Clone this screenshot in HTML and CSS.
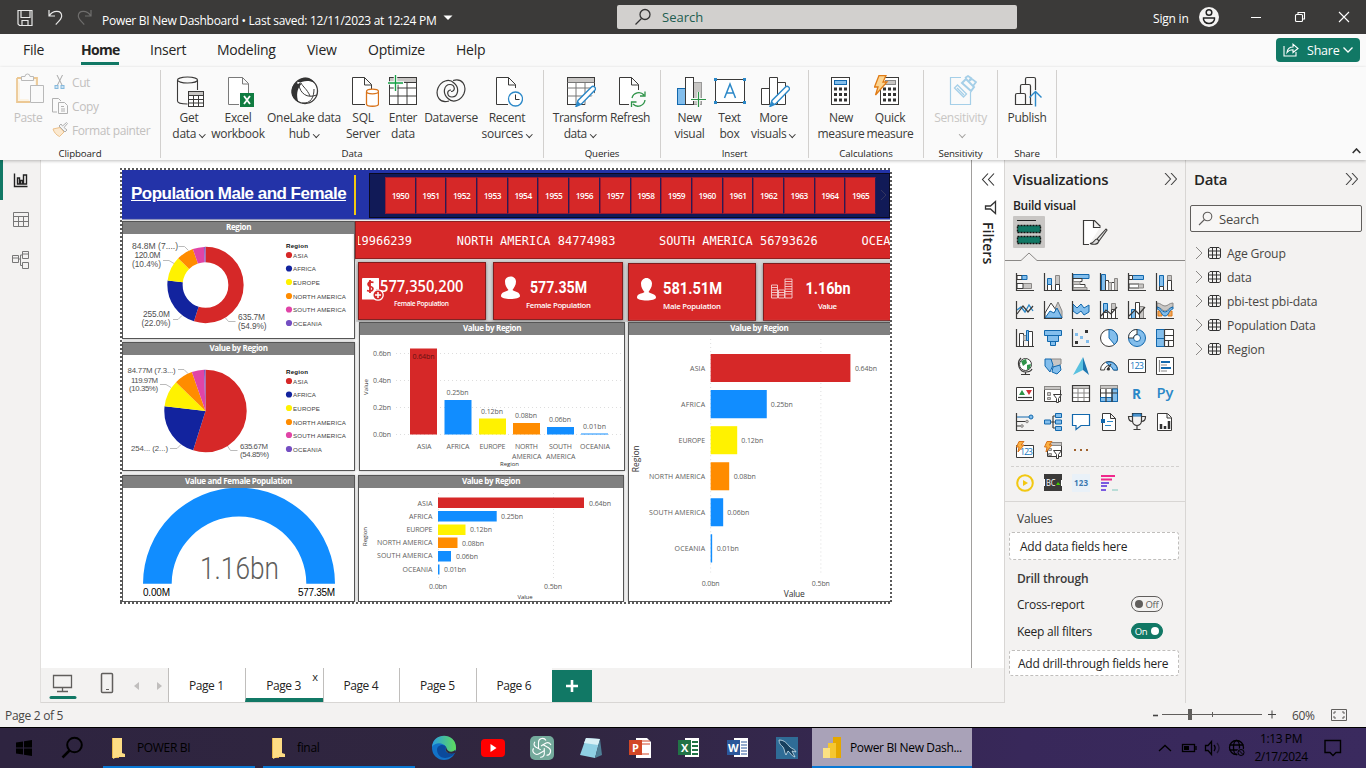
FILE: index.html
```html
<!DOCTYPE html>
<html lang="en">
<head>
<meta charset="utf-8">
<title>Power BI New Dashboard</title>
<link rel="stylesheet" href="styles.css">
</head>
<body>
<header class="titlebar">
  <svg class="quick" width="100" height="34" viewBox="0 0 100 34">
    <g fill="none" stroke="#e8e8e8" stroke-width="1.2"><path d="M18 10.5h14v15H19.500l-1.500-1.500zM21 10.500v7h9v-7M22 25v-4.500h6V25"/><path d="M49 10v6h6M49.500 15.500c3-5 12-6 12.200.5 0 3-3 5.500-6 8.500"/></g>
    <path d="M91 10v6h-6M90.500 15.500c-3-5-12-6-12.200.5 0 3 3 5.500 6 8.500" fill="none" stroke="#6f6e6d" stroke-width="1.2"/>
  </svg>
  <span class="doc">Power BI New Dashboard • Last saved: 12/11/2023 at 12:24 PM</span>
  <svg class="caret" width="10" height="6" viewBox="0 0 10 6"><path d="M.5.5h9L5 5z" fill="#fff"/></svg>
  <div class="topsearch"><svg width="18" height="18" viewBox="0 0 18 18"><g fill="none" stroke="#333" stroke-width="1.3"><circle cx="11" cy="6.500" r="5"/><path d="M7.500 10.500L1.500 16.500"/></g></svg><span>Search</span></div>
  <span class="signin">Sign in</span>
  <svg class="avatar" width="20" height="20" viewBox="0 0 20 20"><circle cx="10" cy="10" r="10" fill="#f3f2f1"/><g fill="none" stroke="#222" stroke-width="1.500"><circle cx="10" cy="5.500" r="2.800"/><path d="M4.500 11h11c.5 3-2 5.500-5.500 5.500S4 14 4.500 11z"/></g></svg>
  <svg class="winbtns" width="100" height="12" viewBox="0 0 100 12"><g fill="none" stroke="#fff" stroke-width="1.100"><path d="M0 6.500h10M88 1l10 10M98 1L88 11"/><rect x="44.500" y="3.500" width="7" height="7" rx="1"/><path d="M47 3.500V1.500h6.500V8H51.500"/></g></svg>
</header>

<nav class="tabs">
  <span>File</span><span class="on">Home</span><span>Insert</span><span>Modeling</span><span>View</span><span>Optimize</span><span>Help</span>
  <button class="share"><svg width="16" height="14" viewBox="0 0 16 14"><path d="M1 3v10h12V9M4 9.500c.5-4 3-5.500 6-5.500V1.200l5 4.300-5 4V6.800C7.500 6.800 5.500 7.500 4 9.500z" fill="none" stroke="#fff" stroke-width="1.100"/></svg>Share<svg width="10" height="6" viewBox="0 0 10 6"><path d="M.5.5L5 5 9.500.5" fill="none" stroke="#fff" stroke-width="1.300"/></svg></button>
</nav>

<section class="ribbon">
  <div class="group g-clip">
    <div class="clip">
      <div class="paste"><svg width="30" height="32" viewBox="0 0 30 32"><path d="M1 5h20v8M1 5v24h13" fill="#fcf3e3" stroke="#ecc894" stroke-width="1.800"/><path d="M4 8h15v5h-5v13H4z" fill="#fbfbfb"/><path d="M5.500 7.500v-4h3.500a2.500 2.500 0 015 0h3.500v4zM14.500 12.500h13v17h-13z" fill="#fafafa" stroke="#b9b9b9"/></svg>Paste</div>
      <div class="cliplist">
        <span><svg width="16" height="16" viewBox="0 0 16 16"><path d="M5 1l5 10M10.500 1L5.500 11" fill="none" stroke="#a8a8a8"/><g fill="#cfe4f3" stroke="#86bade"><rect x="3" y="11.500" width="3" height="3"/><rect x="9" y="11.500" width="3" height="3"/></g></svg>Cut</span>
        <span><svg width="16" height="16" viewBox="0 0 16 16"><path d="M5 14H.5V.5h6L9 3M6.500 4.500h6l3 3v8h-9zM9 8.500h3M9 11h4M9 13h4" fill="none" stroke="#b0b0b0"/></svg>Copy</span>
        <span><svg width="16" height="16" viewBox="0 0 16 16"><path d="M1 7l7-1.500L12 10l-4.500 4.500C4 13 2 10 1 7z" fill="#fbe9d0" stroke="#ecc08a"/><path d="M7 4l6 6 2-2-3-2.500 3.500-4-1-1-4 3.500L9 2z" fill="#f6f6f6" stroke="#b0b0b0"/></svg>Format painter</span>
      </div>
    </div>
    <footer>Clipboard</footer>
  </div>

  <div class="group g-data">
    <div class="items">
      <div><svg width="32" height="32" viewBox="0 0 32 32"><g fill="none" stroke="#3b3a39" stroke-width="1.100"><ellipse cx="14.500" cy="5" rx="10" ry="3"/><path d="M4.500 5v21c0 2 4 3 10 3M24.500 5v10"/></g><rect x="15.500" y="16.500" width="15" height="15" fill="#fff" stroke="#3b3a39"/><path d="M16 17h14v3H16z" fill="#c8c6c4"/><path d="M15.500 20.500h15M15.500 24.500h15M15.500 28h15M20.500 20v11M25.500 20v11" stroke="#3b3a39"/></svg><b>Get</b><b>data<i></i></b></div>
      <div><svg width="32" height="32" viewBox="0 0 32 32"><path d="M17 29.500H6.500v-27h14l6 6V18M20.500 2.500v6.500h6" fill="#fff" stroke="#7a7a7a"/><rect x="18" y="18" width="14" height="14" fill="#107c41"/><path d="M22 21l6 8M28 21l-6 8" stroke="#fff" stroke-width="1.800"/></svg><b>Excel</b><b>workbook</b></div>
      <div><svg width="32" height="32" viewBox="0 0 32 32"><circle cx="17" cy="16" r="12.500" fill="#fff" stroke="#3b3a39" stroke-width="1.300"/><path d="M9 8c3-7.500 14-7.500 17.500 0C21 5 15 5.500 10 9zM8.500 7C.5 13 2 23 10.500 27.500 8 20 9 14 13 9.500c0-2-3-3.500-4.500-2.500z" fill="#333"/><path d="M11 10c1 8 8 14 17.500 10M14 28c9 1 12-6 12-14M13 8c2 4 6 6 9 13" fill="none" stroke="#3b3a39"/></svg><b>OneLake data</b><b>hub<i></i></b></div>
      <div><svg width="32" height="32" viewBox="0 0 32 32"><path d="M18 29.500H5.500v-27h12l7 7V14M17.500 2.500v7.500h7" fill="#fff" stroke="#3b3a39"/><path d="M19.500 17v12c0 3 12 3 12 0V17" fill="#fff" stroke="#d9731a" stroke-width="1.300"/><ellipse cx="25.500" cy="16.500" rx="6" ry="2.300" fill="#fff" stroke="#d9731a" stroke-width="1.300"/></svg><b>SQL</b><b>Server</b></div>
      <div><svg width="32" height="32" viewBox="0 0 32 32"><rect x="2.500" y="2.500" width="27" height="27" fill="#fff" stroke="#3b3a39"/><path d="M3 3h26v4H3z" fill="#c8c6c4"/><path d="M2.500 7.500h27M2.500 13h27M2.500 21h27M11 8v21M20 8v21" stroke="#3b3a39"/><path d="M1 8h16M8.500 0v16" stroke="#fafafa" stroke-width="3.500"/><path d="M1 8h15M8.500 0v16" stroke="#15a045" stroke-width="1.300"/></svg><b>Enter</b><b>data</b></div>
      <div><svg width="32" height="32" viewBox="0 0 32 32"><g fill="none" stroke="#3b3a39" stroke-width="1.200"><path d="M14 26c-9 3-14-5-11-13C6 6 14 3 19 8c6 5 4 14-2 14-5 0-6-7-1-7"/><path d="M18 5.500c9-3 14 5 11 13-3 7-11 10-16 5-6-5-4-14 2-14 5 0 6 7 1 7"/></g></svg><b>Dataverse</b></div>
      <div><svg width="32" height="32" viewBox="0 0 32 32"><path d="M17 29.500H5.500v-27h12l7 7V13M17.500 2.500v7.500h7" fill="#fff" stroke="#3b3a39"/><circle cx="24.500" cy="24" r="7" fill="#fff" stroke="#2b88c8" stroke-width="1.300"/><path d="M24.500 19.500v5h4" fill="none" stroke="#333"/></svg><b>Recent</b><b>sources<i></i></b></div>
    </div>
    <footer>Data</footer>
  </div>

  <div class="group g-query">
    <div class="items">
      <div><svg width="32" height="32" viewBox="0 0 32 32"><rect x="3.500" y="2.500" width="27" height="27" fill="#fff" stroke="#3b3a39"/><path d="M4 3h26v4H4z" fill="#c8c6c4"/><path d="M3.500 7.500h27M3.500 13h27M3.500 21h27M12 8v21M21 8v21" stroke="#777"/><path d="M20 31h12V16z" fill="#fafafa"/><path d="M12 31.500l2-6L27.500 12c2-2 5 1 3.500 3L17.500 29z" fill="#fff" stroke="#2b88c8" stroke-width="1.400"/><path d="M12 31.500l2-5 3 3z" fill="#2b88c8"/></svg><b>Transform</b><b>data<i></i></b></div>
      <div><svg width="32" height="32" viewBox="0 0 32 32"><path d="M15 29.500H5.500v-27h12l7 7V15M17.500 2.500v7.500h7" fill="#fff" stroke="#3b3a39"/><path d="M18 23a7 7 0 0112-3M31 25a7 7 0 01-12 4M31 16.500V21h-5M17.500 32v-5h5" fill="none" stroke="#2e9348" stroke-width="1.300"/></svg><b>Refresh</b></div>
    </div>
    <footer>Queries</footer>
  </div>

  <div class="group g-insert">
    <div class="items">
      <div><svg width="32" height="32" viewBox="0 0 32 32"><rect x="3.500" y="13.500" width="8" height="16" fill="#83beec" stroke="#1268ad"/><rect x="19.500" y="7.500" width="8" height="22" fill="#c8c6c4" stroke="#999"/><rect x="11.500" y="2.500" width="8" height="27" fill="#fff" stroke="#3b3a39"/><path d="M17 24.500h15M24.500 17v15" stroke="#fafafa" stroke-width="3"/><path d="M17 24.500h15M24.500 17v15" stroke="#2e9348" stroke-width="1.200"/></svg><b>New</b><b>visual</b></div>
      <div><svg width="32" height="32" viewBox="0 0 32 32"><rect x="1.500" y="4.500" width="29" height="23" fill="#fff" stroke="#3b3a39"/><g fill="#2b88c8"><path d="M0 3h3v3H0zM29 3h3v3h-3zM0 26h3v3H0zM29 26h3v3h-3z"/></g><path d="M10.500 23L16 9l5.500 14M12.500 18h7" fill="none" stroke="#2b88c8" stroke-width="1.500"/></svg><b>Text</b><b>box</b></div>
      <div><svg width="32" height="32" viewBox="0 0 32 32"><path d="M3.500 13.500h8v16h-8zM19.500 7.500h8v22h-8zM11.500 2.500h8v27h-8z" fill="#fff" stroke="#3b3a39"/><path d="M12 31.500l2-6L27.500 12c2-2 5 1 3.500 3L17.500 29z" fill="#fff" stroke="#2b88c8" stroke-width="1.400"/><path d="M12 31.500l2-5 3 3z" fill="#2b88c8"/></svg><b>More</b><b>visuals<i></i></b></div>
    </div>
    <footer>Insert</footer>
  </div>

  <div class="group g-calc">
    <div class="items">
      <div><svg width="32" height="32" viewBox="0 0 32 32"><rect x="6.500" y="2.500" width="18" height="27" fill="#fff" stroke="#3b3a39"/><rect x="9.500" y="5.500" width="12" height="4" fill="#83beec" stroke="#1268ad"/><path d="M9 14h13M9 19.500h13M9 25h13" stroke="#333" stroke-width="3" stroke-dasharray="3 2"/></svg><b>New</b><b>measure</b></div>
      <div><svg width="32" height="32" viewBox="0 0 32 32"><rect x="6.500" y="2.500" width="18" height="27" fill="#fff" stroke="#3b3a39"/><rect x="11.500" y="5.500" width="10" height="4" fill="#c8c6c4" stroke="#888"/><path d="M9 14h13M9 19.500h13M9 25h13" stroke="#333" stroke-width="3" stroke-dasharray="3 2"/><path d="M5 .5h7L9 7h4L1.500 20 4 12H.5z" fill="#fbd491" stroke="#e07b16" stroke-width="1.300"/></svg><b>Quick</b><b>measure</b></div>
    </div>
    <footer>Calculations</footer>
  </div>

  <div class="group g-sens">
    <div class="items off">
      <div><svg width="32" height="32" viewBox="0 0 32 32"><path d="M16 2.500H5.500v27h20V17" fill="none" stroke="#a5cfe8" stroke-width="1.200"/><path d="M9.500 13l3-3 9 9-3 3zM12 13l7 7" fill="none" stroke="#a5cfe8" stroke-width="1.300"/><path d="M17 8l9 8 3-4-8-8z" fill="#fafafa" stroke="#a5cfe8" stroke-width="2"/><path d="M20 3l3-2 3 2-2 3 3-2 4 3-3 4" fill="none" stroke="#a5cfe8" stroke-width="1.800"/></svg><b>Sensitivity</b><b><i></i></b></div>
    </div>
    <footer>Sensitivity</footer>
  </div>

  <div class="group g-share">
    <div class="items">
      <div><svg width="32" height="32" viewBox="0 0 32 32"><path d="M14.500 10V4c0-1 .5-1.500 1.500-1.500h7c1 0 1.500.5 1.500 1.500v11M9.500 18v-7c0-1 .5-1.500 1.500-1.500h7c1 0 1.500.5 1.500 1.500v18M4.500 20c0-1 .5-1.500 1.500-1.500h7c1 0 1.500.5 1.500 1.500v9.500h-10zM14.500 29.500h7" fill="none" stroke="#3b3a39" stroke-width="1.200"/><path d="M24.500 31.500v-15M18.500 22.500l6-6 6 6" fill="none" stroke="#2b88c8" stroke-width="1.400"/></svg><b>Publish</b></div>
    </div>
    <footer>Share</footer>
  </div>
  <svg class="collapse" width="9" height="6" viewBox="0 0 9 6"><path d="M.7 5l3.800-4 3.800 4" fill="none" stroke="#333" stroke-width="1.600"/></svg>
</section>

<main class="main">
  <aside class="rail">
    <svg class="sel" width="40" height="40" viewBox="0 160 40 40"><path d="M0 160h3v40H0z" fill="#117865"/><path d="M14.500 173.500v13h13M17.500 184v-6h2v6zM20.500 184v-3.500h2v3.500zM23.500 184v-9h3v9z" fill="none" stroke="#222" stroke-width="1.400"/></svg>
    <svg width="40" height="40" viewBox="0 200 40 40"><path d="M13.500 212.500h15v14h-15zM13.500 216.500h15M13.500 221.500h15M18.500 216v10M23.500 216v10" fill="none" stroke="#777"/></svg>
    <svg width="40" height="40" viewBox="0 240 40 40"><path d="M12.500 255.500h6v7h-6zM22.500 251.500h6v7h-6zM22.500 262.500h6v6h-6zM12.500 258h6M22.500 254h6M18.500 259h2v-4h2M20.500 259v6.500h2" fill="none" stroke="#777"/></svg>
  </aside>

  <div class="work">
    <div class="stage">
      <div class="sheet">
        <div class="report">
          <div class="head">
            <h1>Population Male and Female</h1>
            <div class="rule"></div>
            <div class="slicer"><span>1950</span><span>1951</span><span>1952</span><span>1953</span><span>1954</span><span>1955</span><span>1956</span><span>1957</span><span>1958</span><span>1959</span><span>1960</span><span>1961</span><span>1962</span><span>1963</span><span>1964</span><span>1965</span><svg width="8" height="12" viewBox="0 0 8 12"><path d="M1 1l5 5-5 5" fill="none" stroke="#33355f"/></svg></div>
          </div>
          <div class="body">
            <div class="left">
              <section class="card c1"><h2>Region</h2>
                <svg class="arial" viewBox="123 234 231 104">
                  <g transform="rotate(-90 205.500 285)" fill="none" stroke-width="15.300"><circle cx="205.500" cy="285" r="30.500" pathLength="100" stroke="#d62828" stroke-dasharray="54.9 45.1"/><circle cx="205.500" cy="285" r="30.500" pathLength="100" stroke="#12239e" stroke-dasharray="22 78" stroke-dashoffset="-54.9"/><circle cx="205.500" cy="285" r="30.500" pathLength="100" stroke="#fff200" stroke-dasharray="10.4 89.600" stroke-dashoffset="-76.9"/><circle cx="205.500" cy="285" r="30.500" pathLength="100" stroke="#ff8c00" stroke-dasharray="7.3 92.700" stroke-dashoffset="-87.3"/><circle cx="205.500" cy="285" r="30.500" pathLength="100" stroke="#e044a7" stroke-dasharray="4.8 95.200" stroke-dashoffset="-94.6"/><circle cx="205.500" cy="285" r="30.500" pathLength="100" stroke="#744ec2" stroke-dasharray=".6 99.400" stroke-dashoffset="-99.4"/></g>
                  <path d="M178.500 246.500h6l4 4M163 260.500h6l5 3M173 319.500h5l4-4M225.500 318l3 3.500h7" fill="none" stroke="#aaa" stroke-width=".8"/>
                  <g class="t8"><text x="132" y="249" textLength="46" lengthAdjust="spacingAndGlyphs">84.8M (7....)</text><text x="134.500" y="258" textLength="26">120.0M</text><text x="132" y="267" textLength="29">(10.4%)</text><text x="143" y="317" textLength="27">255.0M</text><text x="141.500" y="326" textLength="29">(22.0%)</text><text x="238" y="320" textLength="27">635.7M</text><text x="238" y="329" textLength="28.500">(54.9%)</text></g>
                  <g class="leg"><text x="286" y="247.500" class="hd" textLength="22">Region</text><circle cx="289" cy="255" r="3.100" fill="#d62828"/><text x="293" y="257.500" textLength="15">ASIA</text><circle cx="289" cy="268.500" r="3.100" fill="#12239e"/><text x="293" y="271" textLength="23">AFRICA</text><circle cx="289" cy="282" r="3.100" fill="#fff200"/><text x="293" y="284.500" textLength="27">EUROPE</text><circle cx="289" cy="296" r="3.100" fill="#ff8c00"/><text x="293" y="298.500" textLength="53">NORTH AMERICA</text><circle cx="289" cy="309.500" r="3.100" fill="#e044a7"/><text x="293" y="312" textLength="53">SOUTH AMERICA</text><circle cx="289" cy="323" r="3.100" fill="#744ec2"/><text x="293" y="325.500" textLength="29">OCEANIA</text></g>
                </svg></section>
              <section class="card c2"><h2>Value by Region</h2>
                <svg class="arial" viewBox="123 355 231 114">
                  <g transform="rotate(-90 205.500 411)" fill="none" stroke-width="41.200"><circle cx="205.500" cy="411" r="20.600" pathLength="100" stroke="#d62828" stroke-dasharray="54.9 45.1"/><circle cx="205.500" cy="411" r="20.600" pathLength="100" stroke="#12239e" stroke-dasharray="22 78" stroke-dashoffset="-54.9"/><circle cx="205.500" cy="411" r="20.600" pathLength="100" stroke="#fff200" stroke-dasharray="10.4 89.600" stroke-dashoffset="-76.9"/><circle cx="205.500" cy="411" r="20.600" pathLength="100" stroke="#ff8c00" stroke-dasharray="7.3 92.700" stroke-dashoffset="-87.3"/><circle cx="205.500" cy="411" r="20.600" pathLength="100" stroke="#e044a7" stroke-dasharray="4.8 95.200" stroke-dashoffset="-94.6"/><circle cx="205.500" cy="411" r="20.600" pathLength="100" stroke="#744ec2" stroke-dasharray=".6 99.400" stroke-dashoffset="-99.4"/></g>
                  <path d="M178 369.500h6l4 4M160 384.500h6l5 3M170 448.500h7l4-4M227.500 446l3 4.500h7" fill="none" stroke="#aaa" stroke-width=".8"/>
                  <g class="t7"><text x="127.500" y="372.500" textLength="48">84.77M (7.3...)</text><text x="131" y="383" textLength="27">119.97M</text><text x="129" y="391" textLength="29">(10.35%)</text><text x="131" y="451" textLength="37">254... (2...)</text><text x="240" y="449" textLength="28">635.67M</text><text x="240" y="457" textLength="29">(54.85%)</text></g>
                  <g class="leg"><text x="286" y="373.500" class="hd" textLength="22">Region</text><circle cx="289" cy="381" r="3.100" fill="#d62828"/><text x="293" y="383.500" textLength="15">ASIA</text><circle cx="289" cy="394.500" r="3.100" fill="#12239e"/><text x="293" y="397" textLength="23">AFRICA</text><circle cx="289" cy="408" r="3.100" fill="#fff200"/><text x="293" y="410.500" textLength="27">EUROPE</text><circle cx="289" cy="422" r="3.100" fill="#ff8c00"/><text x="293" y="424.500" textLength="53">NORTH AMERICA</text><circle cx="289" cy="435" r="3.100" fill="#e044a7"/><text x="293" y="437.500" textLength="53">SOUTH AMERICA</text><circle cx="289" cy="449" r="3.100" fill="#744ec2"/><text x="293" y="451.500" textLength="29">OCEANIA</text></g>
                </svg></section>
              <section class="card c3"><h2>Value and Female Population</h2>
                <svg class="arial" viewBox="123 488 231 113"><path d="M143 583.700a96 96 0 01192 0h-28.700a67.300 67.300 0 00-134.600 0z" fill="#118dff"/><text x="200" y="578.500" class="big" textLength="79" lengthAdjust="spacingAndGlyphs">1.16bn</text><text x="143" y="596" font-size="10" textLength="27">0.00M</text><text x="298" y="596" font-size="10" textLength="37">577.35M</text></svg></section>
            </div>
            <div class="right">
              <svg class="ticker" viewBox="355 222 535 36"><svg x="357" y="222" width="533" height="36" viewBox="357 222 533 36"><text x="346.100" y="245" textLength="65">119966239</text><text x="456" y="245" textLength="159">NORTH AMERICA 84774983</text><text x="658.500" y="245" textLength="159">SOUTH AMERICA 56793626</text><text x="861.500" y="245" textLength="50.500">OCEANIA</text></svg></svg>
              <div class="kpis">
                <div class="kpi kpi-a"><svg viewBox="359 263 126 55"><path d="M363 277.500h15c1 0 1 0 1 1V289h-3v10h-13c-1 0-1 0-1-1v-20z" fill="#fff"/><path d="M373.500 282c-6-2-7 3-3 4s3 6-3.500 4M370 279.500v13" fill="none" stroke="#d62828" stroke-width="1.800"/><circle cx="378" cy="294.500" r="5.200" fill="#d62828" stroke="#fff" stroke-width="1.300"/><path d="M375 294.500h6M378 291.500v6" stroke="#fff" stroke-width="1.500"/><text class="v sg" x="380" y="291" textLength="83.500" lengthAdjust="spacingAndGlyphs">577,350,200</text><text class="l s" x="394" y="305" textLength="55">Female Population</text></svg></div>
                <div class="kpi kpi-b"><svg viewBox="494 263 128 55"><path d="M505 281c0-3 2.500-5 5.500-5s5.500 2 5.500 5c0 4-2 6-3.500 8.500 3 2 7.500 2 7.500 6 0 4-19 4-19 0s4.500-4 7.500-6c-2-2.500-3.500-4.500-3.500-8.500z" fill="#fff"/><text class="v" x="530" y="292.500" textLength="57" lengthAdjust="spacingAndGlyphs">577.35M</text><text class="l" x="526" y="307" textLength="65">Female Population</text></svg></div>
                <div class="kpi kpi-c"><svg viewBox="629 264 126 55"><path d="M641 283c0-3 2.500-5.500 5.500-5.500s5.500 2.500 5.500 5.500c0 4-2 6-3.500 8.500 3 2 7.500 2 7.500 5.500 0 4-19 4-19 0s4.500-3.500 7.500-5.500c-2-2.500-3.500-4.500-3.500-8.500z" fill="#fff"/><text class="v" x="663" y="293" textLength="59" lengthAdjust="spacingAndGlyphs">581.51M</text><text class="l" x="663" y="308" textLength="58">Male Population</text></svg></div>
                <div class="kpi kpi-d"><svg viewBox="764 264 126 55"><g fill="none" stroke="#f6d0d0" stroke-width=".9"><path d="M771.500 284.500h6v13h-6zM778.500 289.500h6v8h-6zM785 278.500h7v19h-7zM771.500 287h6M771.500 289.500h6M771.500 292h6M771.500 294.500h6M778.500 292h6M778.500 294.500h6M785 281h7M785 283.500h7M785 286h7M785 288.500h7M785 291h7M785 293.500h7"/></g><text class="v" x="805.500" y="293" textLength="45" lengthAdjust="spacingAndGlyphs">1.16bn</text><text class="l" x="818" y="308" textLength="19">Value</text></svg></div>
              </div>
              <div class="charts">
                <div class="col">
                  <section class="card c4"><h2>Value by Region</h2>
                    <svg viewBox="360 335 264 134">
                      <path d="M396 353.500h226M396 380.500h226M396 407.500h226M396 434.500h226" class="dot"/>
                      <path d="M410 348.500h27v86h-27z" fill="#d62828"/><path d="M444.500 400h27v34.500h-27zM547 427h27v7.500h-27zM581 433.500h27v1h-27z" fill="#118dff"/><path d="M479 418.500h27v16h-27z" fill="#fff200"/><path d="M513 423h27v11.500h-27z" fill="#ff8c00"/>
                      <g class="ax"><text x="373" y="356" textLength="18">0.6bn</text><text x="373" y="383" textLength="18">0.4bn</text><text x="373" y="410" textLength="18">0.2bn</text><text x="373" y="437" textLength="18">0.0bn</text>
                      <text x="412.500" y="359" textLength="22" fill="#611">0.64bn</text><text x="446.500" y="395" textLength="22">0.25bn</text><text x="481" y="414" textLength="22">0.12bn</text><text x="515" y="418" textLength="22">0.08bn</text><text x="549" y="422" textLength="22">0.06bn</text><text x="583" y="429" textLength="23">0.01bn</text>
                      <text x="417" y="449" textLength="14.500">ASIA</text><text x="446.500" y="449" textLength="23">AFRICA</text><text x="479.500" y="449" textLength="26">EUROPE</text><text x="515" y="449" textLength="23">NORTH</text><text x="512" y="459" textLength="29.500">AMERICA</text><text x="549" y="449" textLength="23">SOUTH</text><text x="546" y="459" textLength="29.500">AMERICA</text><text x="580" y="449" textLength="30">OCEANIA</text></g>
                      <g class="an"><text x="500" y="466" textLength="19">Region</text><text transform="translate(368 395) rotate(-90)" textLength="16">Value</text></g>
                    </svg></section>
                  <section class="card c5"><h2>Value by Region</h2>
                    <svg viewBox="359 488 264 113"><path d="M438.500 493v88M553.500 493v88" class="dot"/>
                      <path d="M438 497.500h146v10.500h-146z" fill="#d62828"/><path d="M438 511h58.700v10.500H438zM438 551h13v10.500h-13zM438 564.500h1.500v10H438z" fill="#118dff"/><path d="M438 524.500h27.500v10.500H438z" fill="#fff200"/><path d="M438 537.500h19.500V548H438z" fill="#ff8c00"/>
                      <g class="ax"><text x="417.500" y="505.500" textLength="15">ASIA</text><text x="409" y="519" textLength="23.500">AFRICA</text><text x="406.500" y="532" textLength="26">EUROPE</text><text x="377" y="545" textLength="55.500">NORTH AMERICA</text><text x="377" y="558" textLength="55.500">SOUTH AMERICA</text><text x="402.500" y="572" textLength="30">OCEANIA</text>
                      <text x="589" y="506" textLength="22">0.64bn</text><text x="501" y="519" textLength="22">0.25bn</text><text x="470" y="532" textLength="22">0.12bn</text><text x="462" y="546" textLength="22">0.08bn</text><text x="456" y="559" textLength="22">0.06bn</text><text x="444" y="572" textLength="22">0.01bn</text><text x="429" y="589" textLength="18">0.0bn</text><text x="544" y="589" textLength="18">0.5bn</text></g>
                      <g class="an"><text x="517.500" y="599" textLength="15">Value</text><text transform="translate(367 546) rotate(-90)" textLength="19">Region</text></g>
                    </svg></section>
                </div>
                <section class="card c6"><h2>Value by Region</h2>
                  <svg viewBox="629 335 261 266"><path d="M710.500 339v233M820.500 339v233" class="dot"/>
                    <path d="M710.500 354H850v28H710.500z" fill="#d62828"/><path d="M710.500 390h56v28h-56zM710.500 498h12.500v28h-12.500zM710.500 534h1.500v28h-1.500z" fill="#118dff"/><path d="M710.500 426H737v28h-26.500z" fill="#fff200"/><path d="M710.500 462H729v28h-18.500z" fill="#ff8c00"/>
                    <g class="ax"><text x="690" y="371" textLength="15">ASIA</text><text x="681" y="407" textLength="24">AFRICA</text><text x="678.500" y="443" textLength="26.500">EUROPE</text><text x="649" y="479" textLength="56">NORTH AMERICA</text><text x="649" y="515" textLength="56">SOUTH AMERICA</text><text x="674.500" y="551" textLength="30.500">OCEANIA</text>
                    <text x="854.500" y="371" textLength="22">0.64bn</text><text x="770.500" y="407" textLength="22">0.25bn</text><text x="741" y="443" textLength="22">0.12bn</text><text x="733.500" y="479" textLength="22">0.08bn</text><text x="727" y="515" textLength="22">0.06bn</text><text x="716.500" y="551" textLength="22">0.01bn</text><text x="701.500" y="586" textLength="18">0.0bn</text><text x="811.500" y="586" textLength="18">0.5bn</text></g>
                    <g class="an lg"><text x="783.500" y="597" textLength="21">Value</text><text transform="translate(639 472) rotate(-90)" textLength="27">Region</text></g>
                  </svg></section>
              </div>
            </div>
          </div>
        </div>
      </div>
      <div class="filters">
        <svg width="32" height="60" viewBox="972 160 32 60"><path d="M988 173.500l-5.500 6 5.500 6M994 173.500l-5.500 6 5.500 6" fill="none" stroke="#333" stroke-width="1.100"/><path d="M995.500 201.500v12l-5-4.500h-5v-3h5z" fill="none" stroke="#333" stroke-width="1.300"/></svg>
        <span>Filters</span>
      </div>
    </div>
    <div class="pages">
      <svg width="127" height="35" viewBox="41 668 127 35"><path d="M53.500 675.500h18v12h-18zM62.500 688v3M57 691.500h11" fill="none" stroke="#605e5c" stroke-width="1.300"/><path d="M51 697.500h24" stroke="#117865" stroke-width="3" stroke-linecap="round"/><rect x="101.500" y="673.500" width="11" height="19" rx="1" fill="none" stroke="#605e5c" stroke-width="1.500"/><path d="M106 689.500h3" stroke="#605e5c"/><path d="M139 682v8l-5-4zM157 682v8l5-4z" fill="#c0bebd"/></svg>
      <div class="pg">Page 1</div><div class="pg on">Page 3<em>x</em></div><div class="pg">Page 4</div><div class="pg">Page 5</div><div class="pg">Page 6</div><div class="plus"><svg width="12" height="12" viewBox="0 0 12 12"><path d="M0 6h12M6 0v12" stroke="#fff" stroke-width="2.600"/></svg></div>
    </div>
  </div>

  <aside class="viz">
    <h3>Visualizations<svg width="13" height="12" viewBox="0 0 13 12"><path d="M1 0l5.500 6L1 12M7 0l5.500 6L7 12" fill="none" stroke="#444" stroke-width="1.100"/></svg></h3>
    <p>Build visual</p>
    <svg class="modes" width="180" height="52" viewBox="1005 215 180 52"><rect x="1013" y="217" width="32" height="32" rx="1" fill="#c8c6c4"/><path d="M1017 221.500h19" stroke="#222"/><path d="M1017.500 226.500h23v7h-23zM1017.500 237.500h23v7h-23z" fill="#117865" stroke="#111" stroke-width="1.400" stroke-dasharray="2 1"/><path d="M1089 245.500h-5.500v-24h11l6 6M1093.500 221.500v7h7" fill="#fff" stroke="#3b3a39" stroke-width="1.200"/><path d="M1106 230l-9 10 2 2 8-11zM1097 240c-3 0-2 4-7 4.500 4 1.500 8 1 9-2.500" fill="#ddd" stroke="#3b3a39" stroke-width="1.100"/><path d="M1005 261.500h16l8-7.500 8 7.500h148" fill="none" stroke="#8a8886"/></svg>
    <div class="palette">
      <svg viewBox="0 0 18 18"><path class="g" d="M6.500 10.500h9v5h-9z"/><path class="w" d="M1 2.500h5v4H1zM1 10.500h6v5H1z"/><path class="b" d="M6 2.500h5v4H6z"/><path class="k" d="M.5 0v17.500H18"/></svg>
      <svg viewBox="0 0 18 18"><path class="g" d="M11.500 2.500h4v9h-4z"/><path class="w" d="M3.500 11.500h4v6h-4zM11.500 11.500h4v6h-4z"/><path class="b" d="M3.500 5.500h4v6h-4z"/><path class="k" d="M.5 0v17.500H18"/></svg>
      <svg viewBox="0 0 18 18"><path class="b" d="M1 1.500h16v4H1z"/><path class="w" d="M1 5.500h9v3H1zM1 11.500h12v3H1z"/><path class="g" d="M1 8.500h7v3H1zM1 14.500h14v2.500H1z"/><path class="k" d="M.5 0v17.500H18"/></svg>
      <svg viewBox="0 0 18 18"><path class="b" d="M1.500 1.500h4v16h-4z"/><path class="w" d="M5.500 7.500h3v10h-3zM11.500 9.500h3v8h-3z"/><path class="g" d="M8.500 9.500h3v8h-3zM14.500 5.500h3v12h-3z"/><path class="k" d="M.5 0v17.500H18"/></svg>
      <svg viewBox="0 0 18 18"><path class="b" d="M4.500 2.500h11v4h-11z"/><path class="w" d="M1 2.500h3.500v4H1zM1 11h10v4H1z"/><path class="g" d="M10.500 11h5v4h-5z"/><path class="k" d="M.5 0v17.500H18"/></svg>
      <svg viewBox="0 0 18 18"><path class="b" d="M3.500 2.500h4v11h-4z"/><path class="g" d="M11.500 2.500h4v5h-4z"/><path class="w" d="M3.500 13.500h4v4h-4zM11.500 7.500h4v10h-4z"/><path class="k" d="M.5 0v17.500H18"/></svg>

      <svg viewBox="0 0 18 18"><path d="M1 9l4-3 4 5 4-7 4 6" fill="none" stroke="#2b88c8" stroke-width="1.300"/><path class="k" d="M.5 0v17.500H18M1 13l6-8 5 6 5-6"/></svg>
      <svg viewBox="0 0 18 18"><path class="g" d="M8 14l6-13 4 9v7z"/><path class="w" d="M1 12L7 2l5 7-4 8H1z"/><path class="b" d="M1 17l5-7 4 2 3-5 5 10z"/><path class="k" d="M.5 0v17.500H18"/></svg>
      <svg viewBox="0 0 18 18"><path class="b" d="M1 3l4 4 4-4 3 4 5-3v7l-5 3-3-4-4 3-4-3z"/><path class="k" d="M.5 0v17.500H18"/></svg>
      <svg viewBox="0 0 18 18"><path class="b" d="M3.500 2.500h4v9h-4z"/><path class="g" d="M11.500 2.500h4v6h-4z"/><path class="w" d="M3.500 11.500h4v6h-4zM11.500 8.500h4v9h-4z"/><path class="k" d="M.5 0v17.500H18M1 15l5-6 5 4 6-7"/></svg>
      <svg viewBox="0 0 18 18"><path class="b" d="M3.500 8.500h4v9h-4z"/><path class="g" d="M11.500 5.500h4v12h-4z"/><path class="w" d="M7.500 1.500h4v16h-4z"/><path class="k" d="M.5 0v17.500H18M1 15l6-6 4 4 6-7"/></svg>
      <svg viewBox="0 0 18 18"><path d="M2 10h4v5H2zM12 10h4v5h-4z" fill="#f2a65a" stroke="#e07b16"/><path class="g" d="M1 2c4 0 5 3 8 3s4-3 8-3v4c-4 0-5 4-8 4S5 6 1 6z"/><path class="b" d="M1 6c4 0 4 5 8 5s4-5 8-5v2c-4 0-4 7-8 7S5 8 1 8z"/><path class="k" d="M.5 0v17.500H18"/></svg>

      <svg viewBox="0 0 18 18"><path class="w" d="M3.500 4.500h4v13h-4zM12.500 2.500h4v15h-4z"/><path class="g" d="M7.500 6.500h3v5h-3z"/><path class="b" d="M10.500 1.500h2v10h-2z"/><path class="k" d="M.5 0v17.500H18"/></svg>
      <svg viewBox="0 0 18 18"><path class="b" d="M.5 1.500h17v5H.5zM3.500 6.500h11v6h-11zM6.500 12.500h5v4h-5z"/></svg>
      <svg viewBox="0 0 18 18"><path d="M3 4h3v3H3zM8 7h3v3H8zM14 11h3v3h-3z" fill="#83beec"/><path d="M13 1h3v3h-3zM3 12h3v3H3z" fill="#333"/><path class="k" d="M.5 0v17.500H18"/></svg>
      <svg viewBox="0 0 18 18"><circle class="w" cx="9" cy="9" r="8.500"/><path class="b" d="M9 .5a8.500 8.500 0 015.500 15L9 9z"/></svg>
      <svg viewBox="0 0 18 18"><circle cx="9" cy="9" r="6" fill="none" stroke="#83beec" stroke-width="5"/><circle cx="9" cy="9" r="8.500" fill="none" stroke="#1268ad"/><circle cx="9" cy="9" r="3.500" fill="#fff" stroke="#1268ad"/><path class="w" d="M9 .5v5C7 5.500 5.500 7 5.500 9h-5C.5 4 4 .5 9 .5z"/></svg>
      <svg viewBox="0 0 18 18"><path class="w" d="M.5.5h17v17H.5z"/><path class="b" d="M.5.500h8v9h-8zM.5 9.500h8v8h-8z"/><path class="k" d="M8.500.5v17M8.500 6.500h9M8.500 11.500h9M12.500 11.500v6"/></svg>

      <svg viewBox="0 0 18 18"><circle class="w" cx="9.500" cy="7.500" r="6"/><path d="M5 4l5-2 1 4-4 3zM11 8l4-1-1 4-3 2z" fill="#2e9348"/><path class="k" d="M5 1C0 6 3 15 10 15c3 0 5-1 6-3M9.500 15v2.500M5 17.500h9"/></svg>
      <svg viewBox="0 0 18 18"><path class="g" d="M7 2h10v5l-5 4-4-2z"/><path class="b" d="M1 2h6l2 6-3 7-5-6zM9 10l7-2 1 5-4 4-5-2z"/></svg>
      <svg viewBox="0 0 18 18"><path d="M11 0L1 18l10-5z" fill="#59c1e0"/><path d="M11 0l6 18-6-5z" fill="#1d76b0"/></svg>
      <svg viewBox="0 0 18 18"><path class="w" d="M.5 13a8.500 8.500 0 0117 0h-4a4 4 0 00-9 0z"/><path class="b" d="M6 5.500a8.500 8.500 0 0111.500 7.500h-4l-2-3z"/><path class="k" d="M7 13l4-6"/><circle cx="8.500" cy="12" r="1.500" fill="#333"/></svg>
      <svg viewBox="0 0 18 18"><path class="w" d="M.5 2.500h17v13H.5z"/><text x="2" y="12" textLength="14" font-size="9" fill="#1478c0">123</text></svg>
      <svg viewBox="0 0 18 18"><path class="w" d="M.5.500h17v17H.5z"/><path d="M5 5h9M5 11h10" stroke="#1268ad" stroke-width="2"/><path class="k" d="M3.500 3v12M5 8h6M5 14h6" opacity=".6"/></svg>

      <svg viewBox="0 0 18 18"><path class="w" d="M.5 2.500h17v13H.5z"/><path d="M3 10l3-5 3 5z" fill="#2e9348"/><path d="M10 5h6l-3 5z" fill="#d13438"/><path class="k" d="M2 12.500h14"/></svg>
      <svg viewBox="0 0 18 18"><path class="w" d="M.5 1.500h16v15H.5z"/><path class="g" d="M.5 1.500h16v3H.5zM3.500 7.500h3v3h-3zM3.500 12.500h3v2h-3z"/><path class="w" d="M9.500 9.500h8l-3 4v4h-2v-4z"/></svg>
      <svg viewBox="0 0 18 18"><path class="w" d="M.5.5h17v16H.5z"/><path class="g" d="M.5.5h17v3H.5zM.5 8h17M.5 12.500h17M6 4v13M12 4v13"/><path class="k" d="M.5.5h17v16H.5z"/></svg>
      <svg viewBox="0 0 18 18"><path class="w" d="M.5.500h17v16H.5z"/><path class="g" d="M.5.500h17v3H.5z"/><path class="b" d="M12 4h5.500v12.500H12zM.5 12.500H12v4H.5z"/><path class="k" d="M.5 8h17M6 4v13M12 4v13"/></svg>
      <svg viewBox="0 0 18 18"><text x="4" y="14" font-size="14" font-weight="700" fill="#2b88c8" textLength="9" lengthAdjust="spacingAndGlyphs">R</text></svg>
      <svg viewBox="0 0 18 18"><text x=".5" y="12.500" font-size="14" font-weight="600" fill="#2b88c8" textLength="17" lengthAdjust="spacingAndGlyphs">Py</text></svg>

      <svg viewBox="0 0 18 18"><path class="k" d="M.5 0v17.500H18M1 8.500h11M1 13h6" /><path d="M1 4h12" stroke="#1268ad"/><circle class="b" cx="15" cy="4" r="2"/><circle class="g" cx="11" cy="8.500" r="1.300"/><circle class="g" cx="6" cy="13" r="1.300"/></svg>
      <svg viewBox="0 0 18 18"><path class="k" d="M6 9h6M9 3v12M9 3h3M9 15h3"/><path class="b" d="M.5 7h6v4h-6zM11.500.5h6v4h-6zM11.500 7h6v4h-6zM11.500 13.500h6v4h-6z"/></svg>
      <svg viewBox="0 0 18 18"><path d="M.5 1.500h17v11H9l-5 4v-4H.5z" fill="#fff" stroke="#1268ad" stroke-width="1.200"/></svg>
      <svg viewBox="0 0 18 18"><path class="w" d="M2.500.5h8l5 5v12h-13zM10.500.5v5h5"/><path d="M1 6h4v4H1z" fill="#1268ad"/><path d="M7 8.500h6M5 12.500h6" stroke="#2b88c8"/></svg>
      <svg viewBox="0 0 18 18"><path class="k" d="M4.500.5h9v7c0 3-2 5-4.500 5s-4.500-2-4.500-5zM4 3.500H.5c0 3 1 5 4 5M14 3.500h3.500c0 3-1 5-4 5M9 12v4M5.500 16.500h7"/><path class="b" d="M5 1h8v2H5z"/></svg>
      <svg viewBox="0 0 18 18"><path class="w" d="M1.500.5h10l4 4v13h-14zM11 1v4h4"/><path d="M5 16v-5M9 16v-3M13 16V8" stroke="#333" stroke-width="2.500"/></svg>

      <svg viewBox="0 0 18 18"><path class="w" d="M.5 4.500h17v12H.5z"/><text x="4" y="14" textLength="13" font-size="9" fill="#1478c0">123</text><path class="o" d="M3 .5h5L5 4h3L2 11l1-5H.5z"/></svg>
      <svg viewBox="0 0 18 18"><path class="w" d="M3.500 1.500h14v14h-14z"/><path class="g" d="M6.500 1.500h11v3h-11zM4.500 7.500h3v2h-3zM4.500 12.500h3v2h-3z"/><path class="w" d="M9.500 9.500h8l-3 4v4h-2v-4z"/><path class="o" d="M3 .5h5L5 4h3L2 11l1-5H.5z"/></svg>
      <svg viewBox="0 0 18 18"><path d="M2 8h2v2H2zM8 8h2v2H8zM14 8h2v2h-2z" fill="#a0622d"/></svg>
    </div>
    <div class="palette custom">
      <svg viewBox="0 0 18 18"><circle cx="9" cy="9" r="7.800" fill="none" stroke="#f2c811" stroke-width="2"/><path d="M7 6l5 3-5 3z" fill="#f2c811"/></svg>
      <svg viewBox="0 0 18 18"><path d="M0 0h18v17H0z" fill="#3b3a39"/><path d="M.5 5v7M17.500 6v6" stroke="#fff"/><text x="2" y="12" font-size="9" fill="#fff" textLength="9.500" lengthAdjust="spacingAndGlyphs">BC</text><path d="M12 11l2-3 2.500 3z" fill="#4c0"/></svg>
      <svg viewBox="0 0 18 18"><path d="M0 0h18v18H0z" fill="#e9f1f8"/><text x="2" y="12" font-size="8" font-weight="700" fill="#3a78b0" textLength="14">123</text></svg>
      <svg viewBox="0 0 18 18"><path d="M1 2h14M1 5.500h11" stroke="#f0288c" stroke-width="2"/><path d="M1 9h8M1 12h6M1 16h5" stroke="#7a5ae0" stroke-width="1.800"/><path d="M12 16h6" stroke="#b9ddd7" stroke-width="2"/></svg>
    </div>
    <div class="wells">
      <h4 class="plain">Values</h4>
      <div class="well">Add data fields here</div>
      <h4>Drill through</h4>
      <div class="opt">Cross-report<span class="tog"><u></u>Off</span></div>
      <div class="opt o2">Keep all filters<span class="tog yes">On<u></u></span></div>
      <div class="well w2">Add drill-through fields here</div>
    </div>
  </aside>

  <aside class="data">
    <h3>Data<svg width="13" height="12" viewBox="0 0 13 12"><path d="M1 0l5.500 6L1 12M7 0l5.500 6L7 12" fill="none" stroke="#444" stroke-width="1.100"/></svg></h3>
    <div class="dsearch"><svg width="15" height="15" viewBox="0 0 15 15"><g fill="none" stroke="#605e5c" stroke-width="1.100"><circle cx="9.500" cy="5.500" r="4.300"/><path d="M6.500 8.500L1 14"/></g></svg>Search</div>
    <ul>
      <li><svg viewBox="0 0 28 14"><path class="ch" d="M1 1l6 6-6 6"/><path class="tb" d="M15 1.500h9l1.500 1.500v8.500l-1.500 1h-9l-1.500-1V3zM13.500 5h12M13.500 9h12M17.500 1.500v11M21.500 1.500v11"/></svg>Age Group</li>
      <li><svg viewBox="0 0 28 14"><path class="ch" d="M1 1l6 6-6 6"/><path class="tb" d="M15 1.500h9l1.500 1.500v8.500l-1.500 1h-9l-1.500-1V3zM13.500 5h12M13.500 9h12M17.500 1.500v11M21.500 1.500v11"/></svg>data</li>
      <li><svg viewBox="0 0 28 14"><path class="ch" d="M1 1l6 6-6 6"/><path class="tb" d="M15 1.500h9l1.500 1.500v8.500l-1.500 1h-9l-1.500-1V3zM13.500 5h12M13.500 9h12M17.500 1.500v11M21.500 1.500v11"/></svg>pbi-test pbi-data</li>
      <li><svg viewBox="0 0 28 14"><path class="ch" d="M1 1l6 6-6 6"/><path class="tb" d="M15 1.500h9l1.500 1.500v8.500l-1.500 1h-9l-1.500-1V3zM13.500 5h12M13.500 9h12M17.500 1.500v11M21.500 1.500v11"/></svg>Population Data</li>
      <li><svg viewBox="0 0 28 14"><path class="ch" d="M1 1l6 6-6 6"/><path class="tb" d="M15 1.500h9l1.500 1.500v8.500l-1.500 1h-9l-1.500-1V3zM13.500 5h12M13.500 9h12M17.500 1.500v11M21.500 1.500v11"/></svg>Region</li>
    </ul>
  </aside>
</main>

<footer class="status"><span>Page 2 of 5</span><svg width="126" height="24" viewBox="1152 704 126 24"><path d="M1153 716.500h5" stroke="#444" stroke-width="1.600"/><path d="M1162 715.500h100M1212.500 713v5" stroke="#605e5c"/><path d="M1268 715.500h8M1272 711.500v8" stroke="#444"/><path d="M1188 710h4v11h-4z" fill="#605e5c"/></svg><span class="pct">60%</span><svg width="16" height="12" viewBox="0 0 16 12"><path d="M.5.500h15v11H.5z" fill="none" stroke="#605e5c"/><path d="M3 5V3h2M11 3h2v2M3 7v2h2M11 9h2V7" fill="none" stroke="#605e5c"/></svg></footer>

<footer class="taskbar">
  <svg class="start" width="103" height="40" viewBox="0 728 103 40"><path d="M16 742.500l7-1v6h-7zM24 741.300l8-1.300v7.500h-8zM16 748.500h7v6l-7-1zM24 748.500h8v7.500l-8-1.300z" fill="#000"/><circle cx="74.500" cy="745" r="7.300" fill="none" stroke="#000" stroke-width="2"/><path d="M69.500 750.500l-7 7" stroke="#000" stroke-width="2.500"/></svg>
  <div class="task"><svg width="14" height="22" viewBox="0 0 14 22"><path d="M0 1h7v20H0z" fill="#e8b64c"/><path d="M1 1h9v15l3 1v3H5l-4 2z" fill="#fddc84"/></svg>POWER BI</div>
  <div class="task t2"><svg width="14" height="22" viewBox="0 0 14 22"><path d="M0 1h7v20H0z" fill="#e8b64c"/><path d="M1 1h9v15l3 1v3H5l-4 2z" fill="#fddc84"/></svg>final</div>
  <svg class="apps" width="397" height="40" viewBox="415 728 397 40">
    <defs><linearGradient id="e" x1="0" y1="0" x2="1" y2="0"><stop offset="0" stop-color="#2a9de0"/><stop offset="1" stop-color="#5fdc5a"/></linearGradient></defs>
    <circle cx="444" cy="748" r="12" fill="#1272c8"/><path d="M432 747c1-15 24-15 24 1 0 4-4 6-8 5-4-1 0-3-2-6-3-5-11-5-14 0z" fill="url(#e)"/><path d="M437 750c0-6 8-6 9-3-3 4 2 8 9 6-4 6-17 8-18-3z" fill="#0b4a9c"/><path d="M446 747c-2 5 3 8 9 6l1-1-1-2c-3 3-8 2-9-3z" fill="#2f2642"/>
    <rect x="481" y="739" width="24" height="18" rx="4" fill="#f00"/><path d="M490.500 744v8l6-4z" fill="#fff"/>
    <rect x="530" y="736" width="24" height="24" rx="5" fill="#74aa9c"/><g fill="none" stroke="#fff" stroke-width="1.100"><path id="p" d="M538.500 749v-6.500a4 4 0 017.500-2M541 746l5-3a4 4 0 015 2"/><use href="#p" transform="rotate(120 542 748)"/><use href="#p" transform="rotate(240 542 748)"/></g>
    <path d="M586 738l14 1-5 19-15-3z" fill="#8fd0e4"/><path d="M586 738l14 1-2 6-14-2z" fill="#d8f0f6"/><path d="M600 739l2 16-7 3z" fill="#4e7f96"/>
    <g><path d="M636 738h11l4 4v16h-15z" fill="#fff"/><path d="M642 741h8M642 744h8M642 754h7" stroke="#d24726"/><path d="M629 740h13v15h-13z" fill="#d24726"/><text x="632" y="752" font-size="11" font-weight="700" fill="#fff">P</text></g>
    <g><path d="M685 738h14v19h-14z" fill="#fff"/><path d="M692 742h6M692 746h6M692 750h6M692 754h6" stroke="#217346" stroke-width="2"/><path d="M678 740h13v15h-13z" fill="#217346"/><text x="681" y="752" font-size="11" font-weight="700" fill="#fff">X</text></g>
    <g><path d="M734 738h14v19h-14z" fill="#fff"/><path d="M741 742h6M741 745h6M741 748h6M741 751h6M741 754h6" stroke="#2b579a"/><path d="M727 740h13v15h-13z" fill="#2b579a"/><text x="728" y="752" font-size="11" font-weight="700" fill="#fff">W</text></g>
    <rect x="776" y="737" width="22" height="22" fill="#2f6c96"/><path d="M779 740c6 0 8 4 11 7 2 2 5 2 6 5l-4-1 3 6c-4-1-5-5-7-6l-2 4c-2-3-1-5-3-8-2-2-4-3-4-7z" fill="#17405e" stroke="#cfe3ee" stroke-width=".8"/>
  </svg>
  <div class="task active"><svg width="22" height="22" viewBox="0 0 22 22"><path d="M12 0h8v21h-8z" fill="#e5a800"/><path d="M7 6h8v15H7z" fill="#f5c731"/><path d="M2 11h7v10H2z" fill="#fbe183"/></svg>Power BI New Dash...</div>
  <svg class="tray" width="96" height="40" viewBox="1150 728 96 40"><g fill="none" stroke="#000" stroke-width="1.300"><path d="M1159 751l6-5.500 6 5.500"/><rect x="1182.500" y="744.500" width="12" height="7"/><path d="M1196 746v4"/><path d="M1205.500 745.500h2.500l3.500-4v13l-3.500-4h-2.500zM1214 745c1.500 2 1.500 4 0 6"/><path d="M1217 743c2.500 3 2.500 7 0 10" opacity=".5"/><circle cx="1236.500" cy="747.500" r="7"/><ellipse cx="1236.500" cy="747.500" rx="3" ry="7"/><path d="M1229.500 745h14M1229.500 750h9"/></g><path d="M1184 746h5v4h-5z" fill="#000"/><circle cx="1241" cy="752.500" r="4.200" fill="#38285a"/><circle cx="1241" cy="752.500" r="3" fill="none" stroke="#000"/><path d="M1239 750.500l4 4" stroke="#000"/></svg>
  <div class="clock"><span>1:13 PM</span><span>2/17/2024</span></div>
  <svg width="18" height="18" viewBox="0 0 18 18"><path d="M1 1.500h15.500v12H12L9 16.500l-3-3H1z" fill="none" stroke="#000" stroke-width="1.400"/></svg>
</footer>
</body>
</html>
```
FILE: styles.css
```css
*{box-sizing:border-box}
body{margin:0;width:1366px;height:768px;overflow:hidden;display:flex;flex-direction:column;font-family:"Open Sans","Noto Sans",sans-serif;font-size:12px;color:#252423;background:#f3f2f1}
svg{display:block;flex:none}
h1,h2,h3,h4,p,ul{margin:0;padding:0;font-weight:400}

.titlebar{height:34px;flex:none;background:#3b3a39;color:#fff;display:flex;align-items:center}
.doc{font-size:12px;letter-spacing:-.28px;width:337px;margin-left:2px;margin-top:6px;white-space:nowrap}
.caret{margin:2px 0 0 4px}
.topsearch{margin-left:164px;width:400px;height:24px;background:#d2d0ce;border-radius:2px;display:flex;align-items:center;padding-left:17px;gap:10px;font-size:13px;color:#215e50}
.signin{margin:2px 0 0 136px;width:36px;font-size:12px;letter-spacing:-.2px;white-space:nowrap}
.avatar{margin-left:10px}
.winbtns{margin-left:32px}

.tabs{height:33px;flex:none;background:#fafafa;display:grid;grid-template-columns:58px 69px 67px 90px 61px 88px 820px 84px;padding-left:23px;font-size:14px;letter-spacing:-.25px}
.tabs span{height:31px;line-height:32px;justify-self:start}
.tabs .on{font-weight:700;letter-spacing:-.75px;border-bottom:3px solid #117865;width:38px}
.share{height:24px;margin-top:4px;border:0;border-radius:4px;background:#117865;color:#fff;font:12.500px "Open Sans",sans-serif;letter-spacing:-.2px;display:flex;align-items:center;padding:0 0 0 7px;gap:5px}
.share svg:first-child{margin-right:3px}
.share svg:last-child{margin-left:-2px}

.ribbon{height:93px;flex:none;background:#fafafa;display:flex;position:relative;z-index:2;box-shadow:0 1px 3px rgba(0,0,0,.25);padding-top:3px}
.group{height:88px;border-right:1px solid #d2d0ce;display:flex;flex-direction:column;align-items:center;justify-content:space-between}
.group footer{font-size:9.700px;letter-spacing:-.1px;line-height:12px;margin-bottom:-2px}
.items{display:grid}
.items div{display:flex;flex-direction:column;align-items:center;padding-top:5px}
.items svg{margin-bottom:3px}
.items b{font-weight:400;font-size:12px;letter-spacing:-.3px;line-height:16px;white-space:nowrap;color:#3b3a39}
.items i{display:inline-block;width:4.500px;height:4.500px;border:solid currentColor;border-width:0 1.500px 1.500px 0;transform:rotate(45deg);margin:0 1px 2px 4px}
.items.off b{color:#c8c6c4}
.items.off i{border-color:#a19f9d}
.g-clip{width:161px}.g-data{width:383px}.g-query{width:117px}.g-insert{width:148px}.g-calc{width:115px}.g-sens{width:74px}.g-share{width:59px}
.g-data .items{grid-template-columns:42px 56px 76px 42px 38px 58px 54px;margin-right:2px}
.g-query .items{grid-template-columns:56px 44px}
.g-query b{letter-spacing:-.45px}
.g-insert .items{grid-template-columns:42px 38px 50px;margin-right:2px}
.g-calc .items{grid-template-columns:48px 50px}
.clip{display:flex;align-self:flex-start;padding-left:13px;color:#c2c0be;letter-spacing:-.4px}
.paste{width:30px;margin-right:11px;margin-top:3px;display:flex;flex-direction:column;align-items:center;gap:4px}
.paste svg{margin-left:6px}
.cliplist{display:flex;flex-direction:column;margin-left:-2px}
.cliplist span{height:24px;display:flex;align-items:center;gap:4px;white-space:nowrap}
.collapse{margin:78px 0 0 295px}

.main{height:543px;flex:none;display:flex}
.rail{width:41px;background:#f3f2f1;border-right:1px solid #e1dfdd}
.work{width:963px;display:flex;flex-direction:column}
.stage{height:508px;background:#fff;display:flex;padding-top:8px}
.sheet{margin-left:79px;width:772px;height:436px;padding:2px;background:
 repeating-linear-gradient(90deg,#5a5a5a 0 2px,#fff 2px 4px) top/100% 2px no-repeat,
 repeating-linear-gradient(90deg,#5a5a5a 0 2px,#fff 2px 4px) bottom/100% 2px no-repeat,
 repeating-linear-gradient(#5a5a5a 0 2px,#fff 2px 4px) left/2px 100% no-repeat,
 repeating-linear-gradient(#5a5a5a 0 2px,#fff 2px 4px) right/2px 100% no-repeat}
.report{width:768px;height:432px;background:#fff;overflow:hidden}
.head{height:50px;background:#2333a8;display:flex;align-items:center;border-bottom:1px solid #888fc0}
.head h1{font:bold 17px "Liberation Sans",Arial,sans-serif;letter-spacing:-.52px;color:#fff;text-decoration:underline;width:232px;padding-left:9px;white-space:nowrap;margin-top:-2px}
.rule{width:2px;height:40px;background:#f2c811}
.slicer{margin-left:13px;width:521px;height:45px;margin-top:1px;background:#111a57;border:1px solid #0a0a20;display:flex;align-items:center;padding-left:15px}
.slicer span{width:30.700px;height:37px;border:1px solid #9a1a30;border-right-color:#2b1b55;background:#d62828;color:#fff;font-size:8.300px;font-weight:600;letter-spacing:-.4px;display:flex;align-items:center;justify-content:center}
.slicer svg{margin-left:4px}
.body{display:flex}
.left{width:234px;padding-top:1px}
.right{width:534px}
.card{background:#fff;border:1px solid #555;border-right-width:1.500px;box-shadow:0 0 3px #aaa;overflow:hidden}
.card h2{height:12px;line-height:10px;background:#808080;color:#fff;font-size:8px;font-weight:700;letter-spacing:-.35px;text-align:center}
.card svg{display:block;width:100%}
.c1,.c2,.c3{width:233px}
.c1{height:118px;margin-bottom:3px}.c2{height:129px;margin-bottom:4px}.c3{height:127px}
.arial{font-family:"Liberation Sans",Arial,sans-serif}
.t8{font-size:8.300px;fill:#505050}.t7{font-size:7.800px;fill:#505050}
.leg{font-size:6.200px;fill:#444}.leg .hd{font-weight:700;fill:#111}
.big{font:300 32px Roboto,sans-serif;fill:#605e5c}
.ticker{width:535px;height:38px;margin:1px 0 0 -1px;background:#d62828;border:1px solid #8f2020;border-width:1px 0 1px 1px;box-shadow:0 1px 3px #888;font:12px "DejaVu Sans Mono",monospace;fill:#fff}
.kpis{display:flex;padding:3px 0 1px 2px;background:#d4d4d4;height:63px}
.kpi{height:58px;background:#d62828;border:1px solid #7e1d1d;box-shadow:0 1px 3px #777;flex:none}
.kpi svg{width:100%;height:100%}
.kpi-a{width:128px}.kpi-b{width:130px;margin-left:7px}.kpi-c{width:128px;margin:1px 0 0 5px}.kpi-d{width:128px;margin:1px 0 0 7px}
.kpi text{fill:#fff}
.v{font:700 16px Roboto,sans-serif}
.v.sg{font:600 15.500px "Open Sans",sans-serif}
.l{font-size:7.800px;font-weight:600}.l.s{font-size:6.600px}
.charts{display:flex;padding-left:2px}
.col{width:270px}
.c4{width:266px;height:149px;margin-left:1px;margin-bottom:4px}
.c5{width:266px;height:127px}
.c6{width:263px;height:280px;border-right:0}
.dot{stroke:#ddd;stroke-width:1;stroke-dasharray:1 3;fill:none}
.ax{font-size:7px;fill:#605e5c}
.an{font-size:6px;fill:#333}.an.lg{font-size:8.500px}

.filters{margin-left:79px;margin-top:-8px;width:33px;border-left:1px solid #a19f9d}
.filters span{display:block;writing-mode:vertical-rl;font-size:14px;font-weight:600;letter-spacing:.1px;line-height:20px;margin:2px 0 0 6px}
.pages{height:35px;background:#f3f2f1;border-bottom:1px solid #d8d6d4;display:flex;letter-spacing:-.4px}
.pg{width:76.500px;background:#fff;border-left:1px solid #c0bebc;display:flex;align-items:center;justify-content:center;font-size:12px;position:relative;padding:1px 1px 0 0}
.pg.on{width:78px;border-bottom:4px solid #117865;padding-top:5px}
.pg em{position:absolute;right:5px;top:2px;font-style:normal;font-size:11px;line-height:14px}
.plus{width:40px;height:32px;margin:2px 0 0 0;background:#117865;display:flex;align-items:center;justify-content:center}

.viz{width:181px;border-left:1px solid #d8d6d4;background:#f3f2f1;display:flex;flex-direction:column}
h3{font-size:15px;font-weight:600;letter-spacing:-.3px;line-height:20px;display:flex;justify-content:space-between;align-items:center;padding:9px 8px 0 8px}
.viz p{font-weight:600;font-size:12px;letter-spacing:-.3px;line-height:16px;padding:9px 0 0 8px}
.palette{display:grid;grid-template-columns:repeat(6,28px);grid-auto-rows:28px;margin:2px 0 0 6px;place-items:center}
.palette svg{width:18px;height:18px;overflow:visible}
.custom{border-top:1px dashed #d2d0ce;margin-top:2px;padding-top:2px;width:168px}
.k{fill:none;stroke:#3b3a39;stroke-width:1.200}
.w{fill:#fff;stroke:#3b3a39}
.b{fill:#83beec;stroke:#1268ad}.g{fill:#c8c6c4;stroke:#8a8886}
.o{fill:#fbb040;stroke:#d9731a}
.wells{border-top:1px solid #d8d6d4;margin-top:4px;letter-spacing:-.2px}
h4{font-size:12px;font-weight:600;line-height:16px;padding-left:12px;color:#3b3a39}
h4.plain{font-weight:400;padding-top:9px}
.well{margin:5px 6px 11px 4px;height:28px;background:#fff;border:1px dashed #c0bebc;border-radius:3px;display:flex;align-items:center;padding-left:10px;white-space:nowrap;letter-spacing:-.25px}
.w2{height:26px;padding-left:8px;margin-top:11px}
.opt{display:flex;justify-content:space-between;align-items:center;height:16px;margin:9px 22px 0 12px;letter-spacing:-.25px}
.o2{margin-top:11px}
.tog{width:32px;height:16px;border:1px solid #605e5c;border-radius:8px;display:flex;align-items:center;justify-content:center;gap:2px;font-size:9.500px;color:#605e5c}
.tog u{width:8px;height:8px;border-radius:50%;background:#605e5c}
.tog.yes{background:#117865;border-color:#117865;color:#fff;gap:4px}
.tog.yes u{background:#fff}
.data{width:181px;border-left:1px solid #d8d6d4;background:#f3f2f1}
.dsearch{margin:16px 4px 0 4px;height:27px;border:1px solid #605e5c;border-radius:2px;display:flex;align-items:center;gap:6px;padding-left:7px;font-size:13px;letter-spacing:-.2px;color:#484644;background:#f7f6f5}
.data ul{list-style:none;padding:9px 0 0 9px}
.data li{height:24px;display:flex;align-items:center;gap:4px;font-size:12.200px;letter-spacing:-.2px;color:#484644}
.data li svg{width:28px;height:14px}
.ch{fill:none;stroke:#8a8886}.tb{fill:none;stroke:#333}

.status{height:25px;flex:none;border-bottom:1px solid #000;display:flex;align-items:center;padding-left:5px;letter-spacing:-.3px;color:#484644}
.status span:first-child{width:1147px}
.pct{margin:0 15px 0 14px;width:24px}
.taskbar{height:40px;flex:none;background:linear-gradient(90deg,#2e2440,#30263f 40%,#38285a 75%,#3a2a5e);display:flex;align-items:center;color:#000;letter-spacing:-.35px}
.task{width:152px;height:40px;border-bottom:2px solid #0a78d4;display:flex;align-items:center;padding:1px 0 0 9px;gap:11px;margin-right:8px;white-space:nowrap}
.task.t2{margin-right:0}
.task.active{width:160px;background:#a9a2b8;margin:0;gap:7px}
.tray{margin-left:178px}
.clock{width:70px;display:flex;flex-direction:column;align-items:center;line-height:18px;font-size:12px;letter-spacing:-.4px}
.taskbar>svg:last-child{margin-left:8px}
```
